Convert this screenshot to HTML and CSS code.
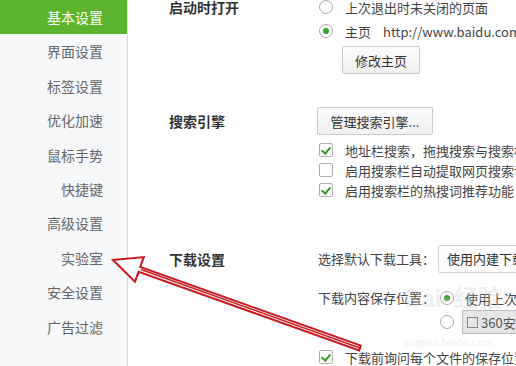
FILE: index.html
```html
<!DOCTYPE html>
<html lang="zh-CN">
<head>
    <meta charset="UTF-8">
    <meta name="viewport" content="width=device-width, initial-scale=1.0">
    <title>设置</title>
    <link rel="stylesheet" href="styles.css">
</head>
<body>

<div class="page">
    <!-- 左侧菜单 -->
    <aside class="sidebar">
        <div class="nav-item active">基本设置</div>
        <div class="nav-item">界面设置</div>
        <div class="nav-item">标签设置</div>
        <div class="nav-item">优化加速</div>
        <div class="nav-item">鼠标手势</div>
        <div class="nav-item">快捷键</div>
        <div class="nav-item">高级设置</div>
        <div class="nav-item">实验室</div>
        <div class="nav-item">安全设置</div>
        <div class="nav-item">广告过滤</div>
    </aside>

    <main class="main">
        <!-- 启动时打开 -->
        <section class="group startup">
            <div class="label">启动时打开</div>
            <div class="controls">
                <div class="row"><span class="radio"></span>上次退出时未关闭的页面</div>
                <div class="row"><span class="radio on"></span>主页<span class="url">http://www.baidu.com</span></div>
                <button class="btn btn-home">修改主页</button>
            </div>
        </section>

        <!-- 搜索引擎 -->
        <section class="group search">
            <div class="label label-btn">搜索引擎</div>
            <div class="controls">
                <button class="btn btn-engine">管理搜索引擎...</button>
                <div class="checks">
                    <div class="row check-row"><span class="check on"></span>地址栏搜索，拖拽搜索与搜索框使用相同的搜索引擎</div>
                    <div class="row check-row"><span class="check"></span>启用搜索栏自动提取网页搜索词</div>
                    <div class="row check-row"><span class="check on"></span>启用搜索栏的热搜词推荐功能</div>
                </div>
            </div>
        </section>

        <!-- 下载设置 -->
        <section class="group download">
            <div class="label label-btn">下载设置</div>
            <div class="controls">
                <div class="dl-grid">
                    <div class="dl-name">选择默认下载工具：</div>
                    <div class="select">使用内建下载工具</div>

                    <div class="dl-name dl-save">下载内容保存位置：</div>
                    <div class="row dl-save"><span class="radio on"></span>使用上次下载的位置</div>

                    <div></div>
                    <div class="row dl-path"><span class="radio"></span><span class="path"><span class="path-icon"></span>360安全浏览器下载</span></div>
                </div>
                <div class="row dl-ask"><span class="check on"></span>下载前询问每个文件的保存位置</div>
            </div>
        </section>
    </main>

    <!-- 水印 -->
    <div class="watermark">
        <span class="wm-logo">Bai<span class="wm-paw">&#9679;</span>经验</span>
        <span class="wm-url">jingyan.baidu.com</span>
    </div>

    <!-- 红色箭头 -->
    <svg class="arrow" width="516" height="366" viewBox="0 0 516 366">
        <polygon points="113,260 143.8,257.1 140.2,267 360.8,345.6 359.2,350.4 138.6,271.8 135,281.7"
                 fill="rgba(255,255,255,0.85)" stroke="#c81a1e" stroke-width="2" stroke-linejoin="miter"/>
        <line x1="141" y1="269.5" x2="360" y2="348" stroke="#c81a1e" stroke-width="1.5"/>
    </svg>
</div>

</body>
</html>
```

FILE: styles.css
```css
html, body {
    margin: 0;
    padding: 0;
    overflow: hidden;
}
body {
    font-family: "Noto Sans CJK SC", "Noto Sans", sans-serif;
    font-size: 13px;
    color: #444;
    background-color: white;
}
.page {
    position: relative;
    display: flex;
    width: 516px;
    height: 366px;
    overflow: hidden;
}

/* sidebar */
.sidebar {
    width: 127px;
    flex-shrink: 0;
    background-color: #f7f8fa;
    border-right: 1px solid #d9dadc;
}
.nav-item {
    height: 34.4px;
    line-height: 34.4px;
    padding-right: 24px;
    text-align: right;
    font-size: 14px;
    color: #666;
}
.nav-item.active {
    background-color: #5db52d;
    color: white;
}

/* main */
.main {
    flex: 1;
    padding-left: 41px;
}
.group {
    display: flex;
}
.label {
    width: 149px;
    flex-shrink: 0;
    font-size: 14px;
    font-weight: bold;
    color: #333;
    line-height: 24px;
}
.label-btn {
    line-height: 28px;
}
.controls {
    flex: 1;
    white-space: nowrap;
}
.row {
    display: flex;
    align-items: center;
    height: 24px;
    white-space: nowrap;
}
.url {
    margin-left: 12px;
}

.startup {
    margin-top: -5px;
}
.search {
    margin-top: 33px;
}
.download {
    margin-top: 45px;
}

/* radio and checkbox */
.radio {
    width: 12px;
    height: 12px;
    border: 1px solid #a9a9a9;
    border-radius: 50%;
    background-color: white;
    margin-left: 1px;
    margin-right: 12px;
    position: relative;
    flex-shrink: 0;
}
.radio.on::after {
    content: "";
    position: absolute;
    left: 3px;
    top: 3px;
    width: 6px;
    height: 6px;
    border-radius: 50%;
    background-color: #2ea82a;
}
.check {
    width: 12px;
    height: 12px;
    border: 1px solid #b0b0b0;
    border-radius: 2px;
    background-color: white;
    margin-left: 1px;
    margin-right: 12px;
    position: relative;
    flex-shrink: 0;
}
.check.on::after {
    content: "";
    position: absolute;
    left: 3px;
    top: 1px;
    width: 4px;
    height: 7px;
    border-right: 2px solid #3c9a22;
    border-bottom: 2px solid #3c9a22;
    transform: rotate(40deg);
}

/* buttons */
.btn {
    font-family: inherit;
    font-size: 13px;
    color: #333;
    height: 28px;
    padding: 0;
    border: 1px solid #c9c9c9;
    border-radius: 2px;
    background: linear-gradient(#fdfdfd, #f0f0f0);
    display: block;
}
.btn-home {
    width: 78px;
    margin-left: 24px;
    margin-top: 3px;
}
.btn-engine {
    width: 116px;
    margin-left: -1px;
}
.checks {
    margin-top: 5px;
}
.check-row {
    height: 20px;
}

/* download */
.dl-grid {
    display: grid;
    grid-template-columns: 120px 1fr;
    align-items: center;
}
.dl-name {
    line-height: 24px;
}
.select {
    height: 26px;
    line-height: 26px;
    width: 140px;
    padding-left: 8px;
    border: 1px solid #cfcfcf;
    border-radius: 2px;
    background-color: #fcfcfc;
    color: #333;
    font-size: 13px;
}
.dl-save {
    margin-top: 13px;
}
.dl-grid .row .radio {
    margin-left: 2px;
    margin-right: 11px;
}
.dl-path {
    height: 24px;
}
.path {
    display: flex;
    align-items: center;
    height: 22px;
    width: 130px;
    margin-left: -3px;
    padding-left: 4px;
    border: 1px solid #bdbdbd;
    background-color: #e6e6e6;
    color: #555;
}
.path-icon {
    width: 9px;
    height: 9px;
    border: 1px solid #888;
    margin-right: 3px;
}
.dl-ask {
    margin-top: 11px;
}

/* overlays */
.watermark {
    position: absolute;
    left: 404px;
    top: 284px;
    color: rgba(200, 200, 200, 0.3);
    pointer-events: none;
    white-space: nowrap;
}
.wm-logo {
    display: block;
    font-family: "Liberation Sans", "Noto Sans CJK SC", sans-serif;
    font-size: 24px;
    line-height: 30px;
    font-weight: bold;
}
.wm-paw {
    font-size: 14px;
    vertical-align: top;
    margin-right: 4px;
}
.wm-url {
    display: block;
    margin-top: 22px;
    font-family: "Liberation Sans", sans-serif;
    font-size: 11px;
    line-height: 12px;
}
.arrow {
    position: absolute;
    left: 0;
    top: 0;
    pointer-events: none;
}
```
